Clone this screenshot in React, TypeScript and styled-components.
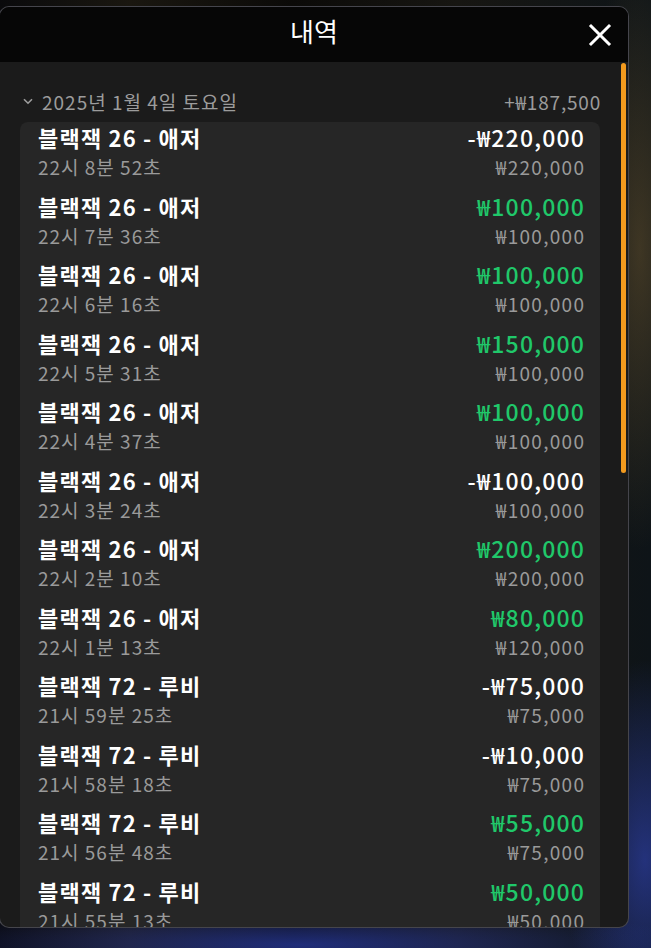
import React, { FC } from "react";
import styled, { createGlobalStyle } from "styled-components";

const GlobalStyle = createGlobalStyle`
  html, body {
    margin: 0;
    padding: 0;
    background: #07080f;
  }
  body {
    font-family: "Noto Sans CJK KR", "Noto Sans", sans-serif;
  }
`;

type Entry = {
  game: string;
  time: string;
  result: string;
  win: boolean;
  bet: string;
};

const entries: Entry[] = [
  { game: "블랙잭 26 - 애저", time: "22시 8분 52초", result: "-₩220,000", win: false, bet: "₩220,000" },
  { game: "블랙잭 26 - 애저", time: "22시 7분 36초", result: "₩100,000", win: true, bet: "₩100,000" },
  { game: "블랙잭 26 - 애저", time: "22시 6분 16초", result: "₩100,000", win: true, bet: "₩100,000" },
  { game: "블랙잭 26 - 애저", time: "22시 5분 31초", result: "₩150,000", win: true, bet: "₩100,000" },
  { game: "블랙잭 26 - 애저", time: "22시 4분 37초", result: "₩100,000", win: true, bet: "₩100,000" },
  { game: "블랙잭 26 - 애저", time: "22시 3분 24초", result: "-₩100,000", win: false, bet: "₩100,000" },
  { game: "블랙잭 26 - 애저", time: "22시 2분 10초", result: "₩200,000", win: true, bet: "₩200,000" },
  { game: "블랙잭 26 - 애저", time: "22시 1분 13초", result: "₩80,000", win: true, bet: "₩120,000" },
  { game: "블랙잭 72 - 루비", time: "21시 59분 25초", result: "-₩75,000", win: false, bet: "₩75,000" },
  { game: "블랙잭 72 - 루비", time: "21시 58분 18초", result: "-₩10,000", win: false, bet: "₩75,000" },
  { game: "블랙잭 72 - 루비", time: "21시 56분 48초", result: "₩55,000", win: true, bet: "₩75,000" },
  { game: "블랙잭 72 - 루비", time: "21시 55분 13초", result: "₩50,000", win: true, bet: "₩50,000" },
];

const Stage = styled.div`
  width: 651px;
  height: 948px;
  box-sizing: border-box;
  padding: 6px 22px 0 0;
  overflow: hidden;
  background:
    radial-gradient(ellipse 60px 300px at 640px 250px, rgba(120, 95, 50, 0.45), transparent),
    radial-gradient(ellipse 400px 40px at 300px 945px, rgba(40, 60, 170, 0.7), transparent),
    radial-gradient(ellipse 80px 200px at 645px 860px, rgba(50, 70, 190, 0.6), transparent),
    linear-gradient(90deg, #0a0a0c 0%, #1a1710 20%, #0b0a08 45%, #171612 70%, #0e1418 100%);
`;

const Modal = styled.div`
  position: relative;
  width: 630px;
  height: 922px;
  margin-left: -1px;
  box-sizing: border-box;
  border: 1px solid rgba(150, 150, 170, 0.35);
  border-radius: 10px;
  background: #1b1b1b;
  overflow: hidden;
  display: flex;
  flex-direction: column;
`;

const Header = styled.div`
  position: relative;
  height: 55px;
  flex: none;
  background: #060606;
  display: flex;
  align-items: center;
  justify-content: center;
`;

const Title = styled.h1`
  margin: 0;
  color: #ffffff;
  font-size: 26px;
  font-weight: 400;
  line-height: 1;
  padding-bottom: 8px;
`;

const CloseButton = styled.button`
  position: absolute;
  right: 16px;
  top: 16px;
  width: 24px;
  height: 24px;
  padding: 0;
  border: none;
  background: none;
  cursor: pointer;
`;

const Body = styled.div`
  flex: 1;
  padding: 28px 28px 0 20px;
  overflow: hidden;
`;

const Thumb = styled.div`
  position: absolute;
  right: 2px;
  top: 56px;
  width: 5px;
  height: 410px;
  border-radius: 3px;
  background: #f39a1e;
`;

const DayHeader = styled.div`
  display: flex;
  align-items: center;
  justify-content: space-between;
  height: 22px;
  margin-bottom: 10px;
  color: #9c9c9c;
  font-size: 19px;
`;

const DayLabel = styled.div`
  display: flex;
  align-items: center;
  gap: 9px;
  padding-left: 3px;
  letter-spacing: 1px;
`;

const DayTotal = styled.span`
  letter-spacing: 0.8px;
  margin-right: -1px;
`;

const Card = styled.div`
  background: #262626;
  border-radius: 8px;
  padding-top: 1px;
`;

const Row = styled.div`
  height: 68.55px;
  box-sizing: border-box;
  padding: 0 16px 0 18px;
  display: flex;
  justify-content: space-between;
  align-items: flex-start;
`;

const Col = styled.div<{ $right?: boolean }>`
  display: flex;
  flex-direction: column;
  align-items: ${(p) => (p.$right ? "flex-end" : "flex-start")};
`;

const GameName = styled.div`
  color: #ffffff;
  font-size: 22px;
  font-weight: 700;
  line-height: 28px;
  letter-spacing: 1.2px;
`;

const Sub = styled.div<{ $num?: boolean }>`
  color: #9a9a9a;
  font-size: 19px;
  line-height: 32px;
  letter-spacing: ${(p) => (p.$num ? "1.3px" : "1px")};
  margin-right: ${(p) => (p.$num ? "-1.3px" : "0")};
`;

const Amount = styled.div<{ $win: boolean }>`
  color: ${(p) => (p.$win ? "#20c86a" : "#ffffff")};
  font-size: 23px;
  font-weight: 500;
  line-height: 28px;
  letter-spacing: 1.2px;
  margin-right: -1.2px;
`;

const Chevron: FC = () => (
  <svg width="10" height="7" viewBox="0 0 10 7">
    <path d="M1 1.2l4 4 4-4" fill="none" stroke="#9c9c9c" strokeWidth="1.6" />
  </svg>
);

const App: FC = () => (
  <>
    <GlobalStyle />
    <Stage>
      <Modal>
        <Header>
          <Title>내역</Title>
          <CloseButton type="button" aria-label="닫기">
            <svg width="24" height="24" viewBox="0 0 24 24">
              <path d="M3 3l18 18M21 3L3 21" stroke="#fff" strokeWidth="3" strokeLinecap="square" />
            </svg>
          </CloseButton>
        </Header>
        <Body>
          <DayHeader>
            <DayLabel>
              <Chevron />
              <span>2025년 1월 4일 토요일</span>
            </DayLabel>
            <DayTotal>+₩187,500</DayTotal>
          </DayHeader>
          <Card>
            {entries.map((e, i) => (
              <Row key={i}>
                <Col>
                  <GameName>{e.game}</GameName>
                  <Sub>{e.time}</Sub>
                </Col>
                <Col $right>
                  <Amount $win={e.win}>{e.result}</Amount>
                  <Sub $num>{e.bet}</Sub>
                </Col>
              </Row>
            ))}
          </Card>
        </Body>
        <Thumb />
      </Modal>
    </Stage>
  </>
);

export default App;
